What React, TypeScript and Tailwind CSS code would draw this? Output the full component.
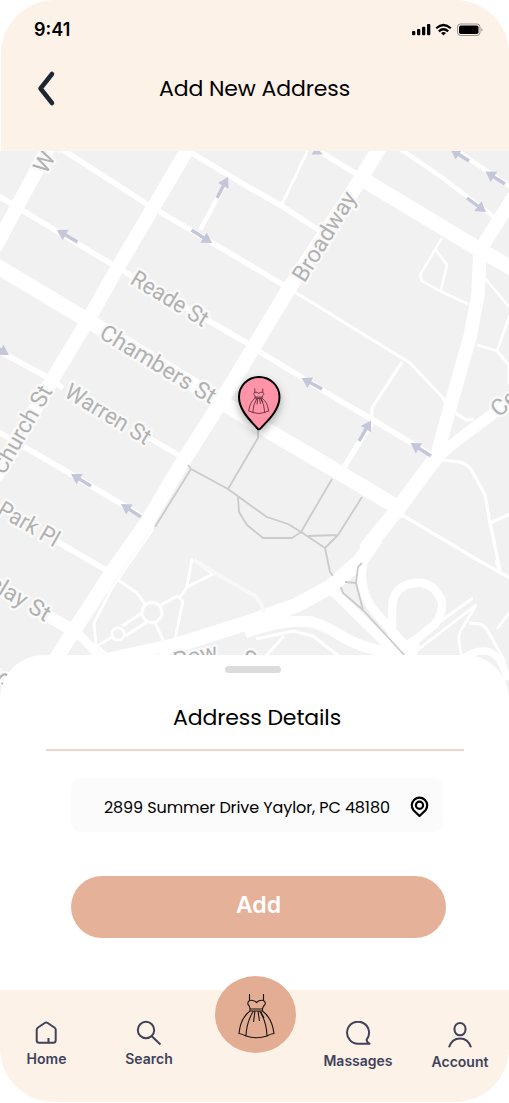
import React from "react";

const GREY = "#cbcbcb";
const ARROW = "#c4c7da";

type Road = { d: string; w: number; c?: string };

const roads: Road[] = [
  { d: "M-5 248L50 145", w: 14 },
  { d: "M190 145L153 208L118 267L88 320L52 380L-5 478", w: 14 },
  { d: "M381 145L360 180L288 290L255 345L217 408L182 463L147 522L112 572L73 632L50 668", w: 14.5 },
  { d: "M-5 265L87 320L277 436L340 473L405 512", w: 15 },
  { d: "M-5 194L20 209L113 265L247 343L257 350L337 399L373 420L435 457", w: 5.5 },
  { d: "M60 148L150 206L260 271L290 289", w: 5.5 },
  { d: "M290 289L410 363L447 402", w: 2.8 },
  { d: "M190 152L250 188L282 206L320 231", w: 5.5 },
  { d: "M200 230L224 186", w: 4.5 },
  { d: "M308 150L282 204", w: 2.8 },
  { d: "M314 148L360 176", w: 5.5 },
  { d: "M362 179L480 250L515 270", w: 15 },
  { d: "M399 148L440 176L494 217", w: 4.5 },
  { d: "M450 146L515 190", w: 4.5 },
  { d: "M514 196L480 250L478 295L470 337L452 400L437 455", w: 13.5 },
  { d: "M440 452L397 510L365 550", w: 15 },
  { d: "M376 538L360 561L330 587L297 605L250 622L177 645L100 662", w: 15 },
  { d: "M435 459L458 440L490 416L520 388", w: 11 },
  { d: "M443 399L457 414L466 420L474 419", w: 3.2 },
  { d: "M442 238L420 275L422 281L440 291L468 304M436 250L447 265L441 290", w: 2.5 },
  { d: "M485 278L509 307M477 345L497 351L510 315M497 351L509 365V384", w: 2.7 },
  { d: "M402 362L372 408V420", w: 3.2 },
  { d: "M372 422L341 472", w: 5.5 },
  { d: "M443 460L460 462Q469 465 472 471L485 495L490 523L500 570M490 523L510 514", w: 3.2 },
  { d: "M402 515L483 563L512 579M496 560L500 572", w: 3.2 },
  { d: "M366 553Q360 570 362 582Q364 600 377 614L415 657", w: 9 },
  { d: "M333 591L383 640L400 658", w: 10 },
  { d: "M393 646L392 632V615Q392 602 394 597Q397 590 404 586Q412 582 422 583Q430 584 435 590L441 599Q443 604 441 612Q439 620 434 625L418 638L400 650", w: 8.5 },
  { d: "M245 633Q285 618 312 622C335 628 343 642 373 649L405 658", w: 11 },
  { d: "M256 639L293 631L313 636L340 657M284 636L265 657", w: 3 },
  { d: "M415 652L476 605L460 632Q457 640 462 656M473 598L420 636M469 623L480 624Q486 626 489 633L505 662M510 612L497 629", w: 2.8 },
  { d: "M462 659Q482 645 495 655Q503 662 508 680", w: 7 },
  { d: "M-5 349L47 377L63 388M146 436L180 456", w: 5.5 },
  { d: "M-5 430L71 474L143 517L154 528", w: 5.5 },
  { d: "M56 541L108 571", w: 5.5 },
  { d: "M48 616L76 632", w: 12 },
  { d: "M73 628L104 661", w: 9 },
  { d: "M153 529L112 588L94 623L96 645L110 657M118 580L137 593L145 604M142 613L122 626M147 622L125 636M112 637L97 646M161 605L177 596L183 601L175 639M155 622L165 645M125 657L175 639M180 597L187 587L192 558M187 587L213 574L194 560", w: 2.8 },
  { d: "M194 560L215 573L255 596Q261 601 264 612", w: 4, c: "#f8f8f8" },
];

const footpaths =
  "M188 465L191 469L155 527M191 469L228 489L250 505L267 517L288 524L301 532L325 548L330 572L333 576M228 489L258 438V428M238 497L239 512L247 525L263 538L292 538L301 532L332 479M362 497L338 535L325 548M338 535L308 536M362 563L358 567L356 583L345 582M356 583L363 610M341 587L343 593L363 610L406 657";

const arrows: [number, number, number, number][] = [
  [77.5, 242, 57, 230],
  [217, 198, 228, 177],
  [191.5, 230, 212, 243],
  [-11, 343, 9, 355],
  [322, 389, 301.5, 378],
  [469, 161, 450.5, 149],
  [505, 184, 485.5, 171.5],
  [467, 198, 486, 212],
  [91, 486, 71, 474],
  [141, 517, 121, 504],
  [359, 441, 371, 420.5],
  [431, 456, 410.5, 443],
];

type Label = { t: string; x: number; y: number; r: number; len?: number; end?: boolean };

const labels: Label[] = [
  { t: "Broadway", x: 304.5, y: 283.5, r: -58.5, len: 101 },
  { t: "Reade St", x: 129, y: 283, r: 31, len: 86 },
  { t: "Chambers St", x: 98, y: 337, r: 31, len: 131 },
  { t: "Warren St", x: 63, y: 396, r: 31, len: 96 },
  { t: "Park Pl", x: -4, y: 514, r: 30, len: 67 },
  { t: "Barclay St", x: 45, y: 622, r: 31, end: true, len: 102 },
  { t: "Church St", x: 53, y: 391, r: -60, end: true, len: 98 },
  { t: "W Broadway", x: 46, y: 175, r: -60 },
  { t: "Centre St", x: 499, y: 418, r: -42 },
  { t: "Park Row", x: 219, y: 658, r: -14, end: true },
  { t: "Spruce St", x: 239, y: 662, r: 31 },
  { t: "S", x: 5, y: 687, r: -65 },
];

function Arrow({ p }: { p: [number, number, number, number] }) {
  const [x1, y1, x2, y2] = p;
  const len = Math.hypot(x2 - x1, y2 - y1);
  const angle = (Math.atan2(y2 - y1, x2 - x1) * 180) / Math.PI;
  return (
    <g transform={`translate(${x1} ${y1}) rotate(${angle})`} fill={ARROW}>
      <rect x="0" y="-1.7" width={len - 8} height="3.4" />
      <path d={`M${len - 10} -6L${len} 0L${len - 10} 6Z`} />
    </g>
  );
}

const DRESS =
  "M11.5 1V8M25.5 1V8M11.5 7.5Q9.3 9 10 11.5Q12 13 12 16H24.5Q25 13 27 11.5Q28 9 25.5 7.5Q21.5 6.5 18.5 9.5Q15.5 6.5 11.5 7.5M12 16V18H24.5V16M12 18Q2.5 25 1 40.5Q4.5 41 8 43Q18.5 46.5 29 43Q32 41 36 40.5Q34 25 24.5 18M15.5 18Q8.5 29 8 43M21.5 18Q28.5 28 29 43M17 18L15.5 29M20 18L21.5 28M23 19L26 25";

function MapView() {
  return (
    <svg className="block h-[550px] w-full bg-[#f1f1f1]" viewBox="0 151 509 550">
      <g fill="none" strokeLinejoin="round">
        {roads.map((r, i) => (
          <path key={i} d={r.d} stroke={r.c ?? "#fff"} strokeWidth={r.w} />
        ))}
        <path d="M384 642L418 640L420 646L406 660H392Z" fill="#fff" />
        <circle cx="152" cy="612.5" r="10" stroke="#fff" strokeWidth="2.8" />
        <circle cx="118" cy="634" r="6.2" stroke="#fff" strokeWidth="2.8" />
        <path d={footpaths} stroke={GREY} strokeWidth="1.8" />
      </g>
      {arrows.map((p, i) => (
        <Arrow key={i} p={p} />
      ))}
      <path d="M311.500 154.500L316 147L323 154.500Z" fill={ARROW} />
      <g
        fill="#b1b1b1"
        stroke="#f9f9f9"
        strokeWidth="5"
        strokeLinejoin="round"
        paintOrder="stroke"
        fontFamily="Roboto, sans-serif"
        fontSize="23"
      >
        {labels.map((l) => (
          <text
            key={l.t}
            transform={`translate(${l.x} ${l.y}) rotate(${l.r})`}
            textAnchor={l.end ? "end" : "start"}
            textLength={l.len}
            lengthAdjust="spacingAndGlyphs"
          >
            {l.t}
          </text>
        ))}
      </g>
      <defs>
        <filter id="shade" x="-50%" y="-50%" width="200%" height="200%">
          <feDropShadow dx="0" dy="4" stdDeviation="4" floodColor="#000" floodOpacity="0.3" />
        </filter>
      </defs>
      <path
        d="M259 377C247.500 377 239 386 239 397C239 411 252 422 257 428Q259 430.500 261 428C266 422 279.500 411 279.500 397C279.500 386 270.500 377 259 377Z"
        fill="#ff94a8"
        stroke="#000"
        strokeWidth="2"
        filter="url(#shade)"
      />
      <path
        d={DRESS}
        transform="translate(248.200 388) scale(.57)"
        fill="none"
        stroke="#3c1d26"
        strokeWidth="1.300"
      />
    </svg>
  );
}

function StatusIcons() {
  return (
    <svg className="h-[14px] w-[72px]" viewBox="412 23 72 14">
      <g>
        <rect x="412" y="31" width="3.300" height="4.200" rx="1" />
        <rect x="417" y="29" width="3.300" height="6.200" rx="1" />
        <rect x="422" y="26.700" width="3.300" height="8.500" rx="1" />
        <rect x="427" y="24" width="3.300" height="11.200" rx="1" />
      </g>
      <g fill="none" stroke="#000" strokeWidth="2.200">
        <path d="M436.200 28.300Q443.500 21.700 450.800 28.300" />
        <path d="M438.800 31.300Q443.500 27.200 448.200 31.300" />
      </g>
      <path d="M441 33Q443.500 31 446 33L443.500 35.500Z" />
      <rect x="457.500" y="24" width="22.500" height="11.500" rx="3" fill="none" stroke="#000" strokeOpacity=".38" />
      <rect x="459" y="25.500" width="19.500" height="8.500" rx="1.700" />
      <path d="M481.300 28Q484 29.800 481.300 31.600Z" fillOpacity=".4" />
    </svg>
  );
}

function NavItem({ label, className, children }: { label: string; className: string; children: React.ReactNode }) {
  return (
    <div className={`flex flex-col items-center text-[#40425a] ${className}`}>
      <svg className="h-[30px] w-[30px]" viewBox="0 0 30 30" fill="none" stroke="currentColor" strokeWidth="2">
        {children}
      </svg>
      <span className="text-sm leading-5 font-semibold whitespace-nowrap">{label}</span>
    </div>
  );
}

export default function App() {
  return (
    <div className="flex h-[1103px] w-[509px] flex-col overflow-hidden bg-white font-['Inter',sans-serif] text-black">
      <header className="ml-px h-[151px] shrink-0 rounded-t-[54px] bg-[#fdf2e8]">
        <div className="flex items-center justify-between pt-[17px] pr-[25px] pl-[33px]">
          <span className="text-[18px] leading-[26px] font-semibold">9:41</span>
          <StatusIcons />
        </div>
        <div className="flex items-center pt-[26px] pl-[34px]">
          <svg className="h-10 w-6" viewBox="35 69 24 40" fill="none" stroke="#1c2733" strokeWidth="4.500" strokeLinecap="round" strokeLinejoin="round">
            <path d="M52 74L40.500 88.500L52 103" />
          </svg>
          <h1 className="ml-[100px] font-['Poppins','Inter',sans-serif] text-[22px] leading-10 font-normal tracking-[-0.12px] whitespace-nowrap">
            Add New Address
          </h1>
        </div>
      </header>

      <div className="h-[550px] shrink-0">
        <MapView />
      </div>

      <main className="relative -mt-[46px] flex h-[335px] shrink-0 flex-col items-center rounded-t-[44px] bg-white">
        <div className="mt-[11px] mr-[3px] h-[7px] w-14 rounded-full bg-[#dcdcdc]" />
        <h2 className="mt-[25px] mr-[-5px] font-['Poppins','Inter',sans-serif] text-[22px] leading-10 font-normal tracking-[-0.1px] whitespace-nowrap">
          Address Details
        </h2>
        <div className="mt-[11px] h-0.5 w-[418px] bg-[#f0d6c9]" />
        <div className="mt-[27px] ml-[5px] flex h-[54px] w-[372px] items-center rounded-[10px] bg-[#fbfbfb] pl-[33px]">
          <span className="w-[286px] pt-[5px] font-['Poppins','Inter',sans-serif] text-base tracking-[-0.09px] whitespace-nowrap">
            2899 Summer Drive Yaylor, PC 48180
          </span>
          <svg className="mt-[3px] ml-[20px] h-[22px] w-[20px]" viewBox="0.500 0 20 22" fill="none" stroke="#000" strokeWidth="2.200">
            <path d="M10 20L4 14.200A7.700 7.700 0 1 1 16 14.200Z" strokeLinejoin="round" />
            <circle cx="10" cy="9.200" r="3.600" />
          </svg>
        </div>
        <button className="mt-[44px] ml-[8px] h-[62px] w-[375px] rounded-full bg-[#e5b299] pb-[4px] text-[23px] font-semibold text-white">
          Add
        </button>
      </main>

      <nav className="relative flex h-[112px] shrink-0 items-start rounded-b-[54px] bg-[#fdf2e8]">
        <NavItem label="Home" className="w-[93px] pt-[29px]">
          <path d="M4.700 10.700Q4.700 9.500 5.700 8.800L12.700 4Q14.200 3 15.700 4L22.700 8.800Q23.700 9.500 23.700 10.700V21.300Q23.700 23.800 21.200 23.800H7.200Q4.700 23.800 4.700 21.300ZM16.500 19V24" />
        </NavItem>
        <NavItem label="Search" className="ml-[26px] w-[60px] pt-[29px]">
          <circle cx="12" cy="11" r="8.200" />
          <path d="M17.800 17.200L26.500 25.500" />
        </NavItem>
        <div className="-mt-[14px] ml-[36px] flex h-[77px] w-[81px] items-center justify-center rounded-[50%] bg-[#e2ad93]">
          <svg className="mt-[3px] ml-[2px] h-[46px] w-[37px]" viewBox="0 0 37 46" fill="none" stroke="#1b1410" strokeWidth="1.100">
            <path d={DRESS} />
          </svg>
        </div>
        <NavItem label="Massages" className="ml-[26px] w-[72px] pt-[31px]">
          <path d="M23.500 18.800A11 11 0 1 0 16 22.700H26.500Q24 21.500 23.500 18.800Z" strokeLinejoin="round" />
        </NavItem>
        <NavItem label="Account" className="ml-[36px] w-[60px] pt-[32px]">
          <rect x="9.500" y="1" width="11" height="12.300" rx="5.500" />
          <path d="M4 25.300Q7 16.500 15 16.500Q23 16.500 26 25.300" />
        </NavItem>
      </nav>
    </div>
  );
}
